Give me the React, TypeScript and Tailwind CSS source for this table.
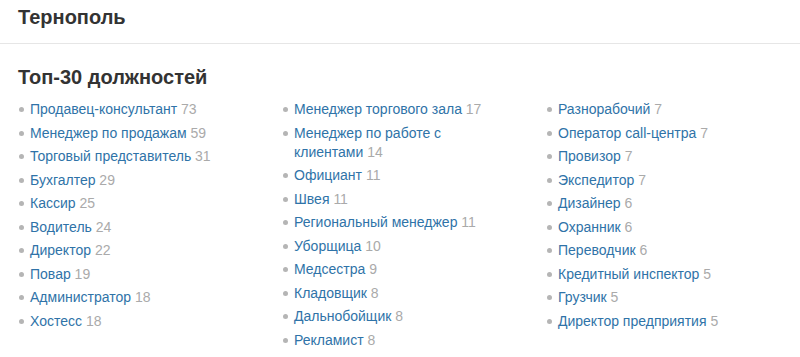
import React from "react";

const cols: [string, number][][] = [
  [
    ["Продавец-консультант", 73],
    ["Менеджер по продажам", 59],
    ["Торговый представитель", 31],
    ["Бухгалтер", 29],
    ["Кассир", 25],
    ["Водитель", 24],
    ["Директор", 22],
    ["Повар", 19],
    ["Администратор", 18],
    ["Хостесс", 18],
  ],
  [
    ["Менеджер торгового зала", 17],
    ["Менеджер по работе с клиентами", 14],
    ["Официант", 11],
    ["Швея", 11],
    ["Региональный менеджер", 11],
    ["Уборщица", 10],
    ["Медсестра", 9],
    ["Кладовщик", 8],
    ["Дальнобойщик", 8],
    ["Рекламист", 8],
  ],
  [
    ["Разнорабочий", 7],
    ["Оператор call-центра", 7],
    ["Провизор", 7],
    ["Экспедитор", 7],
    ["Дизайнер", 6],
    ["Охранник", 6],
    ["Переводчик", 6],
    ["Кредитный инспектор", 5],
    ["Грузчик", 5],
    ["Директор предприятия", 5],
  ],
];

export default function App() {
  return (
    <div className="w-[800px] h-[357px] bg-white overflow-hidden text-[#333]" style={{ fontFamily: '"Liberation Sans", Arial, sans-serif' }}>
      <div className="h-[44px] border-b border-[#e6e6e6] px-[18px] pt-[5px]">
        <h1 className="text-[20px] font-bold leading-[24px] text-[#333]">Тернополь</h1>
      </div>
      <div className="px-[18px] pt-[21px]">
        <h2 className="text-[20px] font-bold leading-[24px] text-[#333]">Топ-30 должностей</h2>
        <div className="grid grid-cols-[264px_264px_264px] mt-[11px]">
          {cols.map((col, i) => (
            <ul key={i} className="flex flex-col gap-[4.5px] pr-[36px]">
              {col.map(([name, n]) => (
                <li key={name} className="flex text-[14px] leading-[19px]">
                  <span className="w-[12px] shrink-0 flex pt-[7px] pl-[1px]">
                    <span className="w-[5px] h-[5px] rounded-full bg-[#b5b5b5]" />
                  </span>
                  <span>
                    <a className="text-[#2f73a8]">{name}</a>{" "}
                    <span className="text-[#aaaaaa]">{n}</span>
                  </span>
                </li>
              ))}
            </ul>
          ))}
        </div>
      </div>
    </div>
  );
}
